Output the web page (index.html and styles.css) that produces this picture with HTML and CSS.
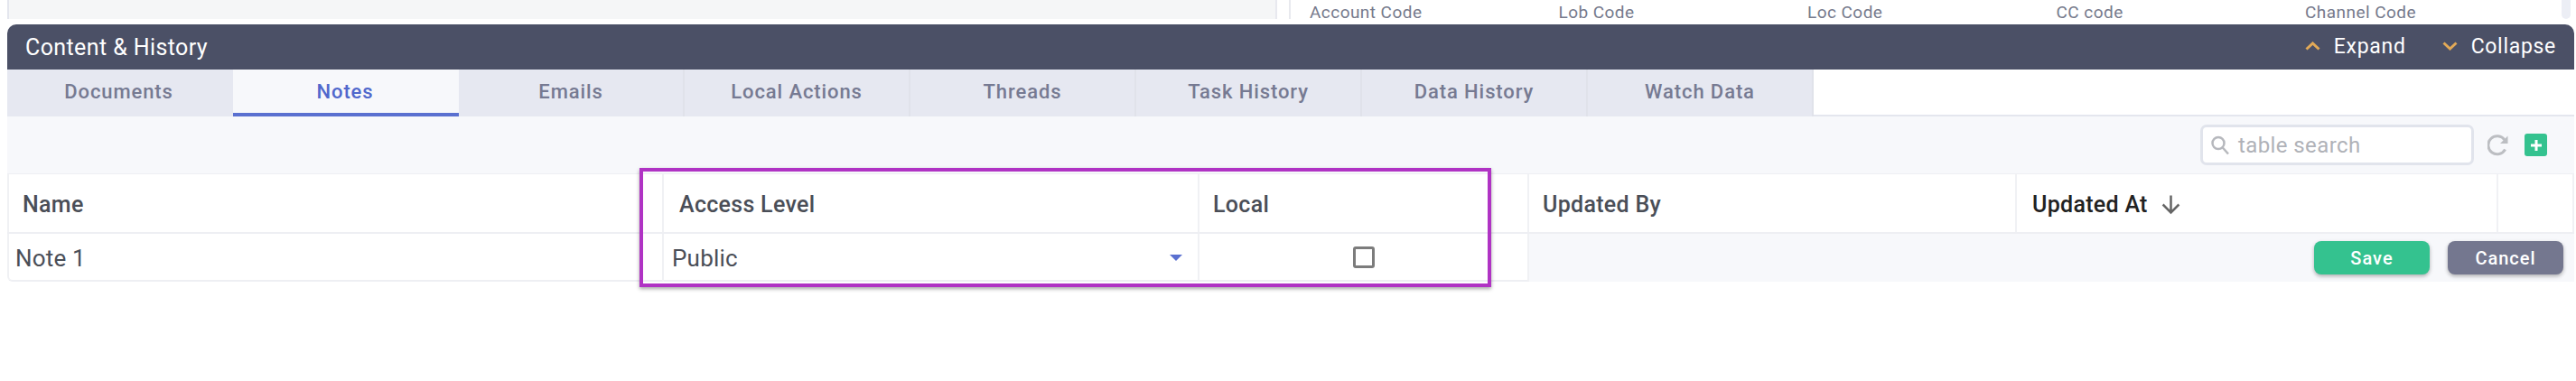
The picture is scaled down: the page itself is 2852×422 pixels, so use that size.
FILE: index.html
```html
<!DOCTYPE html>
<html lang="en">
<head>
<meta charset="utf-8">
<title>Content &amp; History</title>
<link rel="stylesheet" href="styles.css">
</head>
<body>
<div class="page">
  <div class="top-strip">
    <div class="top-left"></div>
    <div class="top-right">
      <div class="codes">
        <span>Account Code</span><span>Lob Code</span><span>Loc Code</span><span>CC code</span><span>Channel Code</span>
      </div>
      <div class="scroll-thumb"></div>
    </div>
  </div>
  <section class="panel">
    <header class="panel-head">
      <h2 class="panel-title">Content &amp; History</h2>
      <div class="panel-actions">
        <span class="action">
          <svg class="chev" width="17" height="10" viewBox="0 0 17 10"><path d="M1.5 8.5 8.5 2l7 6.5"/></svg>
          Expand
        </span>
        <span class="action">
          <svg class="chev" width="17" height="10" viewBox="0 0 17 10"><path d="M1.5 1.5 8.5 8l7-6.5"/></svg>
          Collapse
        </span>
      </div>
    </header>
    <nav class="tabs">
      <div class="tab">Documents</div>
      <div class="tab tab-active">Notes</div>
      <div class="tab">Emails</div>
      <div class="tab">Local Actions</div>
      <div class="tab">Threads</div>
      <div class="tab">Task History</div>
      <div class="tab">Data History</div>
      <div class="tab">Watch Data</div>
    </nav>
    <div class="toolbar">
      <div class="search">
        <svg class="search-icon" width="20" height="22" viewBox="0 0 20 22"><circle cx="8" cy="8.5" r="6.5"/><path d="M12.8 13.5 19 20.5"/></svg>
        <span class="search-text">table search</span>
      </div>
      <svg class="refresh" width="24" height="24" viewBox="0 0 24 24"><path d="M19.6 16.5A10 10 0 1 1 19 6"/><path class="refresh-tip" d="M22.5 1.5v8.5h-8.5z"/></svg>
      <div class="add"><svg width="14" height="14" viewBox="0 0 14 14"><path d="M7 1v12M1 7h12"/></svg></div>
    </div>
    <div class="table">
      <div class="row row-head">
        <div class="cell th">Name</div>
        <div class="cell th">Access Level</div>
        <div class="cell th">Local</div>
        <div class="cell th">Updated By</div>
        <div class="cell th th-sorted">Updated At
          <svg class="sort" width="23" height="23" viewBox="0 0 22 22"><path d="M11 1.5v18M2.5 11l8.5 8.5 8.5-8.5"/></svg>
        </div>
        <div class="cell th"></div>
      </div>
      <div class="row row-edit">
        <div class="cell td td-name">Note 1</div>
        <div class="cell td td-select">Public<span class="caret"></span></div>
        <div class="cell td td-check"><span class="checkbox"></span></div>
        <div class="cell-actions">
          <button class="btn btn-save">Save</button>
          <button class="btn btn-cancel">Cancel</button>
        </div>
      </div>
      <div class="highlight"></div>
    </div>
  </section>
</div>
</body>
</html>
```
FILE: styles.css
```css
* { box-sizing: border-box; }
html, body { margin: 0; padding: 0; background: #fff; }
body { font-family: Roboto, "Liberation Sans", sans-serif; }
.page { padding: 0 2px 0 8px; min-height: 422px; }

.top-strip { display: flex; height: 21px; margin-bottom: 6px; }
.top-left { width: 1406px; background: #f5f6f7; border-left: 2px solid #e4e6ee; border-right: 2px solid #e8e9ef; }
.top-right { flex: 1; margin-left: 13px; border-left: 2px solid #e8e9ee; display: flex; padding-left: 21px; padding-right: 4px; }
.codes { display: grid; grid-template-columns: repeat(5, 275.5px); flex: 1; font-size: 19px; letter-spacing: 0.45px; color: #767a8c; line-height: 28px; }
.scroll-thumb { width: 10px; background: #eceef5; border-radius: 0 0 5px 5px; }

.panel-head { height: 50px; background: #4b5066; border-radius: 10px 10px 0 0; display: flex; align-items: center; justify-content: space-between; padding: 0 20px; color: #fff; position: relative; }
.panel-title { margin: 0; font-size: 25px; font-weight: 400; letter-spacing: 0.4px; }
.panel-actions { display: flex; gap: 40px; font-size: 23px; letter-spacing: 0.7px; padding-bottom: 2px; }
.action { display: flex; align-items: center; gap: 15px; }
.chev { fill: none; stroke: #e2a957; stroke-width: 3; }

.tabs { display: flex; height: 52px; border-bottom: 2px solid #e4e6ee; }
.tab { width: 250px; height: 52px; display: flex; align-items: center; justify-content: center; background: #e6e8f1; border-right: 2px solid #e0e2ea; font-size: 22px; font-weight: 500; letter-spacing: 0.9px; color: #767a92; padding-bottom: 3px; }
.tab:first-child { border-right: 0; padding-right: 3px; }
.tab-active { background: #f7f8fb; color: #5068cc; border-bottom: 4px solid #5a70d0; border-right: 0; padding: 0 2px 0 0; }

.toolbar { height: 63px; background: #f7f8fb; display: flex; align-items: center; justify-content: flex-end; padding: 0 30px 0 0; }
.search { width: 303px; height: 45px; background: #fff; border: 3px solid #e1e4ec; border-radius: 7px; display: flex; align-items: center; padding-left: 9px; gap: 10px; }
.search-icon { fill: none; stroke: #b6b8bd; stroke-width: 2.5; }
.search-text { font-size: 24px; color: #b0b2b8; letter-spacing: 0.4px; }
.refresh { margin-left: 15px; fill: none; stroke: #bcbec2; stroke-width: 3; }
.refresh-tip { fill: #bcbec2; stroke: none; }
.add { width: 25px; height: 25px; margin-left: 17px; background: #34c28f; border-radius: 3px; display: flex; align-items: center; justify-content: center; }
.add svg { fill: none; stroke: #fff; stroke-width: 3; }

.table { position: relative; }
.row { display: grid; grid-template-columns: 727px 593px 365px 540px 533px 1fr; }
.row-head { height: 67px; background: #fff; border-top: 1px solid #eeeff3; border-bottom: 2px solid #eeeff3; }
.row-edit { height: 53px; }
.cell { display: flex; align-items: center; border-right: 2px solid #f0f1f4; }
.cell:first-child { border-left: 2px solid #f0f1f4; }
.th { font-size: 25px; font-weight: 500; color: #4a4e57; padding: 3px 0 0 15px; letter-spacing: 0.3px; }
.row-head .cell:nth-child(2) { padding-left: 17px; }
.th-sorted { color: #222; padding-left: 17px; gap: 14px; }
.sort { fill: none; stroke: #666; stroke-width: 2.4; }
.td { font-size: 26px; color: #4a4e57; letter-spacing: 0.2px; padding-top: 2px; }
.td-name { padding-left: 7px; border-bottom: 2px solid #eeeff3; border-radius: 0 0 0 6px; }
.td-select { padding-left: 9px; padding-right: 17px; justify-content: space-between; border-bottom: 2px solid #eeeff3; }
.caret { width: 0; height: 0; border-left: 7px solid transparent; border-right: 7px solid transparent; border-top: 7px solid #5a70d0; }
.td-check { justify-content: center; border-bottom: 2px solid #eeeff3; padding-top: 1px; }
.checkbox { width: 24px; height: 24px; border: 3px solid #7c7c7c; border-radius: 3px; background: #fff; }
.cell-actions { grid-column: 4 / 7; background: #f7f8fb; display: flex; align-items: center; justify-content: flex-end; gap: 20px; padding-right: 12px; }
.btn { width: 128px; height: 37px; border: 0; border-radius: 8px; font-family: inherit; font-size: 20px; font-weight: 500; letter-spacing: 1px; color: #fff; box-shadow: 0 2px 4px rgba(0, 0, 0, 0.3); padding: 0; }
.btn-save { background: #34c28f; }
.btn-cancel { background: #74778f; }

.highlight { position: absolute; left: 700px; top: -6px; width: 943px; height: 132px; border: 4px solid #b033c4; box-shadow: 0 2px 4px rgba(0, 0, 0, 0.35); }
```
